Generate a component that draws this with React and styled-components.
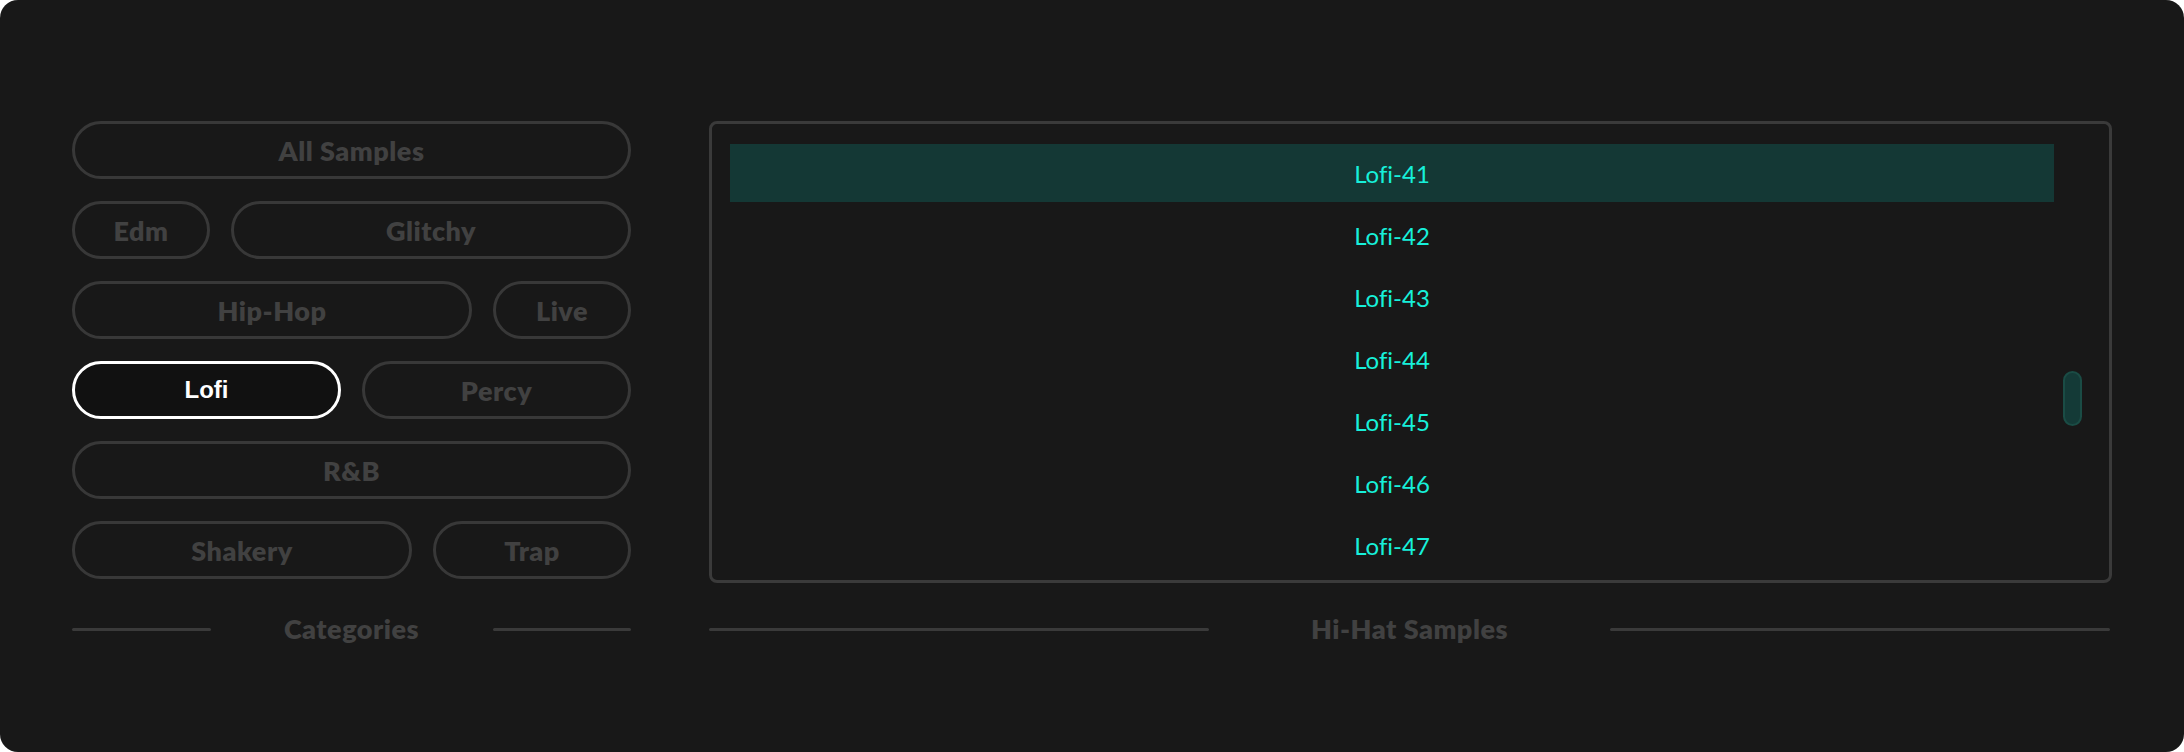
import React from "react";
import styled, { createGlobalStyle } from "styled-components";

// sample browser: category chips on the left, sample list on the right
const categoryRows = [
  [{ name: "All Samples" }],
  [{ name: "Edm", w: 138 }, { name: "Glitchy" }],
  [{ name: "Hip-Hop" }, { name: "Live", w: 138 }],
  [{ name: "Lofi" }, { name: "Percy" }],
  [{ name: "R&B" }],
  [{ name: "Shakery" }, { name: "Trap", w: 198 }],
];

const samples = [41, 42, 43, 44, 45, 46, 47].map((n) => `Lofi-${n}`);

const GlobalStyle = createGlobalStyle`
  html, body {
    margin: 0;
    padding: 0;
    background: #ffffff;
  }
  * {
    box-sizing: border-box;
  }
`;

const App = () => {
  const [category, setCategory] = React.useState("Lofi");
  const [selected, setSelected] = React.useState("Lofi-41");
  const scrollOffset = 227;

  return (
    <>
      <GlobalStyle />
      <Card>
        <Layout>
          <Categories>
            {categoryRows.map((row, i) => (
              <ChipRow key={`row-${i}`}>
                {row.map((c) => (
                  <Chip
                    key={c.name}
                    $w={c.w}
                    $active={category === c.name}
                    onClick={() => setCategory(c.name)}
                  >
                    {c.name}
                  </Chip>
                ))}
              </ChipRow>
            ))}
          </Categories>

          <ListPanel>
            <List>
              {samples.map((s) => (
                <ListItem
                  key={s}
                  $active={selected === s}
                  onClick={() => setSelected(s)}
                >
                  {s}
                </ListItem>
              ))}
            </List>
            <ScrollTrack>
              <ScrollThumb style={{ marginTop: scrollOffset }} />
            </ScrollTrack>
          </ListPanel>

          <Caption $labelWidth={282}>
            <Rule />
            <CaptionText>Categories</CaptionText>
            <Rule />
          </Caption>
          <Caption $labelWidth={401} $inset={2}>
            <Rule />
            <CaptionText>Hi-Hat Samples</CaptionText>
            <Rule />
          </Caption>
        </Layout>
      </Card>
    </>
  );
};

const Card = styled.div`
  width: 100%;
  height: 100vh;
  background-color: #181818;
  border-radius: 18px;
  padding: 121px 72px 0 72px;
`;

const Layout = styled.div`
  display: grid;
  grid-template-columns: 559px 1fr;
  grid-template-rows: 462px 30px;
  column-gap: 78px;
  row-gap: 31px;
`;

const Categories = styled.div`
  display: flex;
  flex-direction: column;
  gap: 22px;
`;

const ChipRow = styled.div`
  display: flex;
  gap: 21px;
`;

const Chip = styled.div`
  display: flex;
  align-items: center;
  justify-content: center;
  height: 58px;
  flex: ${({ $w }) => ($w ? `0 0 ${$w}px` : "1 1 0")};
  border: 3px solid ${({ $active }) => ($active ? "#ffffff" : "#383838")};
  border-radius: 999px;
  background-color: ${({ $active }) => ($active ? "#111111" : "transparent")};
  color: ${({ $active }) => ($active ? "#ffffff" : "#414141")};
  font-family: ${({ $active }) =>
    $active ? `"Liberation Sans", Arial, sans-serif` : `Lato, "Open Sans", sans-serif`};
  font-size: ${({ $active }) => ($active ? "24px" : "27px")};
  font-weight: ${({ $active }) => ($active ? 700 : 800)};
  letter-spacing: ${({ $active }) => ($active ? "0" : "0.5px")};
  font-variant-ligatures: none;
  cursor: pointer;
  user-select: none;
`;

const ListPanel = styled.div`
  display: flex;
  padding: 20px 27px 0 18px;
  border: 3px solid #3a3a3a;
  border-radius: 8px;
  overflow: hidden;
`;

const List = styled.div`
  flex: 1;
  display: flex;
  flex-direction: column;
  gap: 4px;
`;

const ListItem = styled.div`
  display: flex;
  align-items: center;
  justify-content: center;
  height: 58px;
  flex-shrink: 0;
  background-color: ${({ $active }) => ($active ? "#143835" : "transparent")};
  color: #17f0da;
  font-family: Lato, "Open Sans", sans-serif;
  font-size: 24px;
  font-weight: 400;
  font-variant-ligatures: none;
  cursor: pointer;
`;

const ScrollTrack = styled.div`
  width: 19px;
  margin-left: 9px;
`;

const ScrollThumb = styled.div`
  width: 19px;
  height: 55px;
  border-radius: 10px;
  background-color: #143a37;
  border: 2px solid #1a4c45;
`;

const Caption = styled.div`
  display: flex;
  align-items: center;
  padding: 0 ${({ $inset }) => $inset || 0}px 0 0;

  & > span {
    flex: 0 0 ${({ $labelWidth }) => $labelWidth}px;
  }
`;

const Rule = styled.div`
  flex: 1;
  height: 3px;
  border-radius: 2px;
  background-color: #3a3a3a;
`;

const CaptionText = styled.span`
  text-align: center;
  line-height: 30px;
  color: #414141;
  font-family: Lato, "Open Sans", sans-serif;
  font-size: 27px;
  font-weight: 800;
  letter-spacing: 0.5px;
`;

export default App;
